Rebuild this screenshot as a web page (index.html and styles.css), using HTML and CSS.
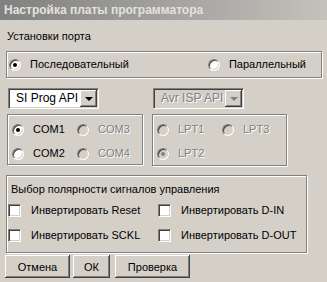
FILE: index.html
```html
<!DOCTYPE html>
<html>
<head>
  <meta charset="utf-8">
  <title>Настройка платы программатора</title>
  <link rel="stylesheet" href="styles.css">
</head>
<body>
  <div class="window">
    <div class="titlebar">Настройка платы программатора</div>
    <div class="main">
      <div class="port-label">Установки порта</div>

      <div class="group port-type">
        <label class="opt"><span class="radio on"></span>Последовательный</label>
        <label class="opt"><span class="radio"></span>Параллельный</label>
      </div>

      <div class="combo-row">
        <div class="combo">
          <span class="combo-text">SI Prog API</span>
          <span class="combo-btn"><span class="arrow"></span></span>
        </div>
        <div class="combo disabled">
          <span class="combo-text">Avr ISP API</span>
          <span class="combo-btn"><span class="arrow"></span></span>
        </div>
      </div>

      <div class="ports-row">
        <div class="group ports com">
          <label class="opt"><span class="radio on"></span>COM1</label>
          <label class="opt disabled"><span class="radio"></span>COM3</label>
          <label class="opt"><span class="radio"></span>COM2</label>
          <label class="opt disabled"><span class="radio"></span>COM4</label>
        </div>
        <div class="group ports lpt">
          <label class="opt disabled"><span class="radio"></span>LPT1</label>
          <label class="opt disabled"><span class="radio"></span>LPT3</label>
          <label class="opt disabled"><span class="radio on"></span>LPT2</label>
        </div>
      </div>

      <div class="group polarity">
        <div class="polarity-label">Выбор полярности сигналов управления</div>
        <div class="checks">
          <label class="opt"><span class="check"></span>Инвертировать Reset</label>
          <label class="opt"><span class="check"></span>Инвертировать D-IN</label>
          <label class="opt"><span class="check"></span>Инвертировать SCKL</label>
          <label class="opt"><span class="check"></span>Инвертировать D-OUT</label>
        </div>
      </div>

      <div class="buttons">
        <button class="btn btn-cancel">Отмена</button>
        <button class="btn btn-ok">ОК</button>
        <button class="btn btn-test">Проверка</button>
      </div>
    </div>
  </div>
</body>
</html>
```

FILE: styles.css
```css
html, body {
  margin: 0;
  padding: 0;
}

body {
  background: #d4d0c8;
  font-family: "Liberation Sans", Arial, sans-serif;
  font-size: 11px;
  color: #000;
}

.window {
  width: 327px;
  height: 282px;
  background: #d4d0c8;
  overflow: hidden;
}

.titlebar {
  height: 20px;
  line-height: 20px;
  padding-left: 4px;
  background: linear-gradient(to right, #808080, #c4c2bc);
  color: #e4e2de;
  font-weight: bold;
  font-size: 12px;
}

.main {
  padding-left: 6px;
}

.port-label {
  margin-top: 10px;
  line-height: 13px;
  padding-left: 1px;
}

/* etched frame like a win32 group box */
.group {
  box-sizing: border-box;
  border: 1px solid #808080;
  box-shadow: inset 1px 1px #fff, 1px 1px #fff;
}

.opt {
  display: flex;
  align-items: center;
  gap: 9px;
  line-height: 13px;
  white-space: nowrap;
}

.opt.disabled {
  color: #808080;
  text-shadow: 1px 1px #fff;
}

.radio {
  flex: none;
  position: relative;
  width: 12px;
  height: 12px;
  box-sizing: border-box;
  border-radius: 50%;
  background: #fff;
  border: 1px solid;
  border-color: #808080 #fff #fff #808080;
  box-shadow: inset 1px 1px #404040, inset -1px -1px #d4d0c8;
}

.radio.on::after {
  content: "";
  position: absolute;
  left: 3px;
  top: 3px;
  width: 4px;
  height: 4px;
  border-radius: 50%;
  background: #000;
}

.opt.disabled .radio {
  background: #d4d0c8;
}

.opt.disabled .radio.on::after {
  background: #808080;
}

.check {
  flex: none;
  width: 13px;
  height: 13px;
  box-sizing: border-box;
  background: #fff;
  border: 1px solid;
  border-color: #808080 #fff #fff #808080;
  box-shadow: inset 1px 1px #404040, inset -1px -1px #d4d0c8;
}

.port-type {
  margin-top: 8px;
  width: 316px;
  height: 27px;
  display: flex;
  align-items: center;
  justify-content: space-between;
  padding: 0 15px 0 2px;
}

.combo-row {
  display: flex;
  margin-top: 10px;
  padding-left: 2px;
  gap: 54px;
}

.combo {
  display: flex;
  width: 91px;
  height: 21px;
  box-sizing: border-box;
  padding: 1px;
  background: #fff;
  border: 1px solid;
  border-color: #808080 #fff #fff #808080;
  box-shadow: inset 1px 1px #404040, inset -1px -1px #d4d0c8;
}

.combo-text {
  flex: 1;
  padding-left: 6px;
  line-height: 17px;
  font-size: 12px;
}

.combo-btn {
  width: 17px;
  height: 17px;
  display: flex;
  align-items: center;
  justify-content: center;
  background: #d4d0c8;
  box-shadow: inset -1px -1px #404040, inset 1px 1px #fff, inset -2px -2px #808080;
}

.arrow {
  width: 0;
  height: 0;
  border-left: 4px solid transparent;
  border-right: 4px solid transparent;
  border-top: 4px solid #000;
  margin-top: 1px;
}

.combo.disabled {
  background: #d4d0c8;
  color: #808080;
}

.combo.disabled .combo-text {
  text-shadow: 1px 1px #fff;
}

.combo.disabled .arrow {
  border-top-color: #808080;
}

.ports-row {
  display: flex;
  margin-top: 5px;
  padding-left: 1px;
  gap: 9px;
}

.ports {
  height: 51px;
  display: grid;
  grid-template-columns: 65px 1fr;
  row-gap: 11px;
  padding: 8px 0 0 4px;
  align-content: start;
}

.com {
  width: 136px;
}

.lpt {
  width: 135px;
  height: 52px;
}

.polarity {
  margin-top: 9px;
  width: 301px;
  height: 78px;
  padding: 7px 0 0 1px;
}

.polarity-label {
  line-height: 13px;
  padding-left: 3px;
}

.checks {
  display: grid;
  grid-template-columns: 150px 1fr;
  row-gap: 12px;
  margin-top: 8px;
}

.checks .opt {
  gap: 10px;
}

.buttons {
  display: flex;
  gap: 3px;
  margin-top: 2px;
  margin-left: -1px;
}

.btn {
  height: 23px;
  padding: 0;
  border: none;
  background: #d4d0c8;
  font-family: inherit;
  font-size: 11px;
  color: #000;
  box-shadow: inset -1px -1px #404040, inset 1px 1px #fff, inset -2px -2px #808080;
}

.btn-cancel {
  width: 65px;
}

.btn-ok {
  width: 37px;
}

.btn-test {
  width: 75px;
  margin-left: 2px;
}
```
